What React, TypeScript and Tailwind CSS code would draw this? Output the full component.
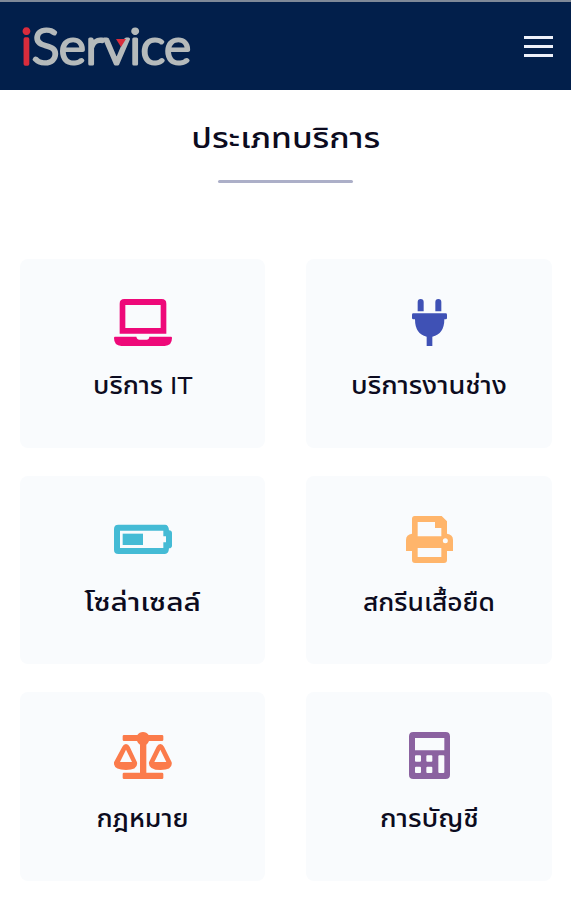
import React from 'react';

interface Service {
  id: string;
  name: React.ReactNode;
  icon: React.ReactNode;
  labelClass: string;
}

const LaptopIcon = () => (
  <svg width="58" height="47" viewBox="0 0 174 141" className="text-[#ee0979]" fill="currentColor">
    <path fillRule="evenodd" d="M31 0H143Q157 0 157 14V104H17V14Q17 0 31 0ZM34 18V87H140V18Z" />
    <path d="M3 113H67Q69 122 76 122H98Q105 122 106 113H171Q174 113 174 117Q174 140 152 141H22Q0 140 0 117Q0 113 3 113Z" />
  </svg>
);

const PlugIcon = () => (
  <svg width="35" height="47" viewBox="0 0 105 141" className="text-[#3f51b5]" fill="currentColor">
    <path d="M17 37V9Q17 0 26 0T35 9V37ZM70 37V9Q70 0 79 0T88 9V37ZM4 43H101Q105 43 105 47V57Q105 61 101 61H97Q97 105 61 113V141H44V113Q9 105 9 61H4Q0 61 0 57V47Q0 43 4 43Z" />
  </svg>
);

const BatteryIcon = () => (
  <svg width="58" height="47" viewBox="0 0 174 141" className="text-[#45bbd5]" fill="currentColor">
    <path fillRule="evenodd" d="M13 26H153Q164 26 165 43Q174 44 174 51V89Q174 96 165 97Q164 114 153 114H13Q0 114 0 101V39Q0 26 13 26ZM18 44V96H148V79H156V61H148V44Z" />
    <path d="M26 53H87V87H26Z" />
  </svg>
);

const PrinterIcon = () => (
  <svg width="47" height="47" viewBox="0 0 141 141" className="text-[#ffb56b]" fill="currentColor">
    <path fillRule="evenodd" d="M26 0H107L123 16V53Q141 55 141 72V105H123V132Q123 141 114 141H27Q18 141 18 132V105H0V72Q0 55 18 53V9Q18 0 26 0ZM35 18V61H106V36H87V18ZM35 96V123H106V96ZM118 67A7 7 0 1 0 118 82A7 7 0 1 0 118 67Z" />
  </svg>
);

const ScaleIcon = () => (
  <svg width="58" height="47" viewBox="0 0 174 141" className="text-[#fb7b4b]" fill="currentColor">
    <path d="M30 9H70Q76 0 87 0T104 9H144Q148 9 148 13V23Q148 27 144 27H105Q102 35 97 38V122H144Q148 122 148 126V137Q148 141 144 141H30Q26 141 26 137V126Q26 122 30 122H78V38Q72 35 69 27H30Q26 27 26 23V13Q26 9 30 9Z" />
    <path fillRule="evenodd" d="M36 36Q43 36 47 44L69 91Q73 114 36 114Q-3 114 0 91L25 44Q29 36 36 36ZM36 53L18 90H54Z" />
    <path fillRule="evenodd" d="M139 36Q146 36 150 44L173 91Q177 114 140 114Q102 114 105 91L128 44Q132 36 139 36ZM139 53L121 90H157Z" />
  </svg>
);

const CalculatorIcon = () => (
  <svg width="41" height="47" viewBox="0 0 123 141" className="text-[#8b62a0]" fill="currentColor">
    <path fillRule="evenodd" d="M13 0H110Q123 0 123 13V128Q123 141 110 141H13Q0 141 0 128V13Q0 0 13 0ZM18 18V55H106V18ZM21 70Q18 70 18 73V86Q18 89 21 89H33Q36 89 36 86V73Q36 70 33 70ZM55 70Q52 70 52 73V86Q52 89 55 89H67Q70 89 70 86V73Q70 70 67 70ZM21 104Q18 104 18 107V120Q18 123 21 123H33Q36 123 36 120V107Q36 104 33 104ZM55 104Q52 104 52 107V120Q52 123 55 123H67Q70 123 70 120V107Q70 104 67 104ZM91 70Q88 70 88 73V120Q88 123 91 123H103Q106 123 106 120V73Q106 70 103 70Z" />
  </svg>
);

const Logo = () => (
  <svg
    width="180"
    height="80"
    viewBox="0 0 180 80"
    fontFamily="Lato, sans-serif"
    fontSize="49"
    fontWeight="300"
    strokeLinejoin="round"
    strokeWidth="3.2"
  >
    <text x="1" y="58" fill="#d92c3c" stroke="#d92c3c" strokeWidth="3.4">i</text>
    <text x="12" y="58" fill="#b5babb" stroke="#b5babb" textLength="159" lengthAdjust="spacingAndGlyphs">Service</text>
    <path d="M96 33H106L101 41Z" fill="#d92c3c" />
  </svg>
);

const services: Service[] = [
  {
    id: 'it',
    name: <>บริการ <span className="font-['Roboto'] font-normal">IT</span></>,
    icon: <LaptopIcon />,
    labelClass: 'scale-x-[1.11]',
  },
  { id: 'technician', name: 'บริการงานช่าง', icon: <PlugIcon />, labelClass: 'scale-x-[1.13]' },
  { id: 'solar', name: 'โซล่าเซลล์', icon: <BatteryIcon />, labelClass: 'scale-x-[1.25]' },
  { id: 'screen', name: 'สกรีนเสื้อยืด', icon: <PrinterIcon />, labelClass: 'scale-x-[1.1]' },
  { id: 'law', name: 'กฎหมาย', icon: <ScaleIcon />, labelClass: 'scale-x-[1.11]' },
  { id: 'accounting', name: 'การบัญชี', icon: <CalculatorIcon />, labelClass: 'scale-x-[1.14]' },
];

const App: React.FC = () => {
  return (
    <div className="h-[900px] overflow-hidden bg-white font-['Noto_Sans','Noto_Sans_Thai',sans-serif] text-[#0c0b20]">
      <header className="flex h-[90px] items-center justify-between border-t-2 border-[#7f8998] bg-[#021f4b] pr-[18px] pl-5">
        <Logo />
        <button className="flex w-[29px] flex-col gap-[6px]" aria-label="menu">
          <span className="h-[3px] bg-[#eef1fa]"></span>
          <span className="h-[3px] bg-[#eef1fa]"></span>
          <span className="h-[3px] bg-[#eef1fa]"></span>
        </button>
      </header>

      <main>
        <div className="flex flex-col items-center pt-[27px]">
          <h1 className="h-[63px] scale-x-[1.2] text-[28px] leading-10 font-medium whitespace-nowrap">ประเภทบริการ</h1>
          <div className="h-[3px] w-[135px] rounded-full bg-[#acafc8]"></div>
        </div>

        <div className="mt-[76px] grid grid-cols-[245px_246px] gap-x-[41px] gap-y-7 pl-5">
          {services.map((service) => (
            <div key={service.id} className="flex h-[188.5px] flex-col items-center rounded-lg bg-[#f9fbfd] pt-10">
              {service.icon}
              <h2 className={`mt-[19px] text-2xl leading-10 font-medium whitespace-nowrap ${service.labelClass}`}>{service.name}</h2>
            </div>
          ))}
        </div>
      </main>
    </div>
  );
};

export default App;
